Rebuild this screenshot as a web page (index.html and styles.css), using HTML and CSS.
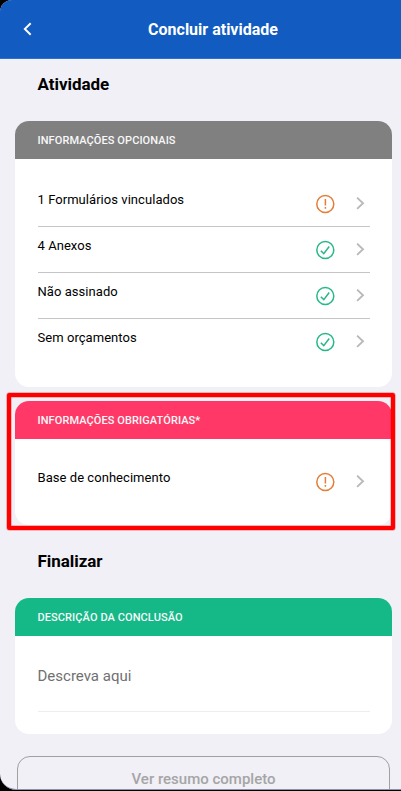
FILE: index.html
```html
<!DOCTYPE html>
<html lang="pt-BR">
<head>
<meta charset="utf-8">
<title>Concluir atividade</title>
<link rel="stylesheet" href="styles.css">
</head>
<body>
<svg class="defs" aria-hidden="true">
  <symbol id="alert" viewBox="0 0 20 20"><circle cx="10.3" cy="10" r="8.5"/><path d="M10.4 5v6.4M10.4 13.1v1.7"/></symbol>
  <symbol id="check" viewBox="0 0 20 20"><circle cx="10.3" cy="10" r="8.5"/><path d="M5.8 10.7l3 2.9 5.4-7.1"/></symbol>
  <symbol id="chevron" viewBox="0 0 10 14"><path d="M2.1 1.6L8 7.3l-5.9 5.6"/></symbol>
</svg>
<div class="screen">
  <header class="topbar">
    <svg class="back" viewBox="0 0 10 14"><path d="M7.7 1.2L1.8 7l5.9 5.8"/></svg>
    <h1>Concluir atividade</h1>
  </header>
  <main>
    <h2>Atividade</h2>
    <section class="card optional">
      <h3>INFORMAÇÕES OPCIONAIS</h3>
      <ul>
        <li><span class="label">1 Formulários vinculados</span><svg class="status warn"><use href="#alert"/></svg><svg class="go"><use href="#chevron"/></svg></li>
        <li><span class="label">4 Anexos</span><svg class="status ok"><use href="#check"/></svg><svg class="go"><use href="#chevron"/></svg></li>
        <li><span class="label">Não assinado</span><svg class="status ok"><use href="#check"/></svg><svg class="go"><use href="#chevron"/></svg></li>
        <li><span class="label">Sem orçamentos</span><svg class="status ok"><use href="#check"/></svg><svg class="go"><use href="#chevron"/></svg></li>
      </ul>
    </section>
    <div class="marked">
      <section class="card required">
        <h3>INFORMAÇÕES OBRIGATÓRIAS*</h3>
        <ul>
          <li><span class="label">Base de conhecimento</span><svg class="status warn"><use href="#alert"/></svg><svg class="go"><use href="#chevron"/></svg></li>
        </ul>
      </section>
      <div class="highlight"></div>
    </div>
    <h2 class="finish">Finalizar</h2>
    <section class="card closing">
      <h3>DESCRIÇÃO DA CONCLUSÃO</h3>
      <div class="field">Descreva aqui</div>
    </section>
    <div class="summary">Ver resumo completo</div>
  </main>
</div>
</body>
</html>
```
FILE: styles.css
```css
* { box-sizing: border-box; }
body {
  margin: 0;
  height: 791px;
  overflow: hidden;
  background: #000;
  font-family: Roboto, "Liberation Sans", sans-serif;
  color: #000;
}
.defs { display: none; }
svg { fill: none; stroke: currentColor; flex: none; }
.screen {
  height: 790px;
  overflow: hidden;
  border-radius: 12px 0 0 16px;
  background: #f1f0f6;
  border-bottom: 1px solid #8f90a8;
}
.topbar {
  height: 59px;
  display: flex;
  align-items: center;
  padding-left: 22.5px;
  background: #125bc0;
  border-bottom: 1px solid #2f70ca;
  color: #fff;
}
.back { width: 10px; height: 14px; stroke-width: 1.9; }
h1 {
  flex: 1;
  margin: 1px 7.5px 0 0;
  text-align: center;
  font-size: 16px;
  line-height: 20px;
  font-weight: 700;
}
main { padding: 0 9px 0 15px; }
h2 {
  margin: 15px 0 0 22.5px;
  height: 47px;
  font-size: 17px;
  line-height: 21px;
  font-weight: 700;
  letter-spacing: -0.05px;
}
.card {
  width: 377px;
  border-radius: 14px;
  overflow: hidden;
  background: #fff;
}
h3 {
  margin: 0;
  height: 38px;
  padding: 1px 0 0 22.5px;
  font-size: 11px;
  line-height: 38px;
  font-weight: 500;
  letter-spacing: 0.09px;
  color: #f8f8f8;
}
.optional { height: 266px; }
.optional h3 { background: #808080; }
.required { height: 124px; }
.required h3 { background: #ff3868; }
.closing { height: 136px; }
.closing h3 { background: #14b987; }
ul {
  margin: 0;
  padding: 22px 22px 0 23px;
  list-style: none;
}
.required ul { padding-top: 20px; }
li {
  height: 46px;
  display: flex;
  align-items: center;
  border-bottom: 1px solid #c5c5c9;
}
li:last-child { border-color: transparent; }
.label {
  flex: 1;
  margin-left: -0.5px;
  padding-bottom: 8px;
  font-size: 13px;
  line-height: 18px;
  letter-spacing: 0.05px;
}
.status { width: 20px; height: 20px; stroke-width: 1.5; margin: 0 20px 0 0; }
.warn { color: #e47d37; }
.ok { color: #27b888; }
.go { width: 10px; height: 14px; stroke-width: 1.9; color: #b9b9b9; margin: 0 5px 1px 0; }
.marked { position: relative; margin-top: 14px; }
.highlight {
  position: absolute;
  left: -8.5px;
  top: -8.5px;
  width: 388.5px;
  height: 137.5px;
  border: 4px solid #f00;
  border-radius: 2px;
  box-shadow: 0 0 0 0.5px rgba(255, 0, 0, .5), inset 0 0 0 0.5px rgba(255, 0, 0, .5);
}
.finish { margin-top: 26px; }
.field {
  margin: 26px 22px 0 22.5px;
  height: 50px;
  border-bottom: 1px solid #eeeeef;
  font-size: 15px;
  line-height: 28px;
  color: #707070;
}
.summary {
  width: 373px;
  height: 46px;
  margin: 22px 0 0 2px;
  border: 1px solid #a0a0a0;
  border-radius: 13px;
  text-align: center;
  font-size: 15px;
  line-height: 44px;
  font-weight: 500;
  color: #a5a5a6;
}
```
